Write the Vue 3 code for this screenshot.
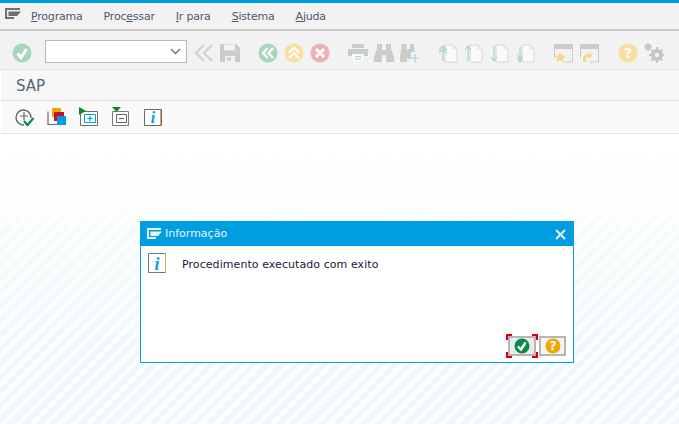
<template>
  <div class="page">
    <div class="topline"></div>

    <div class="menubar">
      <svg class="menu-icon" width="16" height="11" viewBox="0 0 16 11">
        <path d="M0 0h15v2H2v7h7v2H0z" fill="#6f6f6f" />
        <path d="M3.500 3.500H16L12 8H3.500z" fill="#6f6f6f" />
      </svg>
      <a><u>P</u>rograma</a>
      <a>Proc<u>e</u>ssar</a>
      <a><u>I</u>r para</a>
      <a><u>S</u>istema</a>
      <a><u>A</u>juda</a>
    </div>

    <div class="toolbar">
      <svg class="ic" viewBox="0 0 20 20">
        <circle cx="10" cy="10" r="9.500" fill="#a6d7bb" />
        <path d="M5.500 10.500l3.500 4 5.500-8.500" fill="none" stroke="#fff" stroke-width="3" />
      </svg>

      <div class="combo">
        <svg width="11" height="7" viewBox="0 0 11 7">
          <path d="M1 1l4.500 4.500L10 1" fill="none" stroke="#5f6f7f" stroke-width="1.300" />
        </svg>
      </div>

      <svg class="ic back" viewBox="0 0 20 20">
        <path d="M10 2l-8 8 8 8M18 2l-8 8 8 8" fill="none" stroke="#d2d2d2" stroke-width="2.400" />
      </svg>
      <svg class="ic" viewBox="0 0 20 20">
        <path d="M0 1h16l4 4v14H0z" fill="#cbcbcb" />
        <path d="M4 1.500h11v6H4zM5 13h10v6H5z" fill="#f2f2f2" />
        <path d="M7 14.500h4v3H7z" fill="#cbcbcb" />
      </svg>

      <svg class="ic grp" viewBox="0 0 20 20">
        <circle cx="10" cy="10" r="9.500" fill="#a6d7bb" />
        <path d="M9.500 5l-4.500 5 4.500 5M15 5l-4.500 5 4.500 5" fill="none" stroke="#fff" stroke-width="2.200" />
      </svg>
      <svg class="ic" viewBox="0 0 20 20">
        <circle cx="10" cy="10" r="9.500" fill="#f8dfa2" />
        <path d="M5 9.500l5-4.500 5 4.500M5 15l5-4.500 5 4.500" fill="none" stroke="#fff" stroke-width="2.200" />
      </svg>
      <svg class="ic" viewBox="0 0 20 20">
        <circle cx="10" cy="10" r="9.500" fill="#efb0b0" />
        <path d="M6 6l8 8M14 6l-8 8" fill="none" stroke="#fff" stroke-width="3" />
      </svg>

      <svg class="ic grp" viewBox="0 0 20 20">
        <path d="M4 1h12v4H4z" fill="#cbcbcb" />
        <path d="M0 6h20v7H16v-2H4v2H0z" fill="#cbcbcb" />
        <path d="M5 11h10v8H5z" fill="#fafafa" />
        <path d="M7 13.500h6M7 16h6" stroke="#9fd4ef" stroke-width="1" />
      </svg>
      <svg class="ic" viewBox="0 0 20 20">
        <path d="M3 1h5v6h4V1h5v5l3 8v5h-8v-7H8v7H0v-5l3-8z" fill="#cbcbcb" />
      </svg>
      <svg class="ic" viewBox="0 0 20 20">
        <path d="M2 1h4.500v5H10V1h4v5l1 3H11v7H7v3H0v-5z" fill="#cbcbcb" />
        <path d="M15 11v8M11 15h8" stroke="#9fd4ef" stroke-width="1.200" />
      </svg>

      <svg class="ic grp" viewBox="0 0 20 20">
        <path d="M7 2h8l4 4v13H7z" fill="#fafafa" stroke="#d6d6d6" />
        <path d="M14.500 2v4.500H19" fill="#e6e6e6" />
        <path d="M5 18V3M1 7l4-4 4 4M1 10l4-4 4 4" fill="none" stroke="#a6d7bb" stroke-width="1.200" />
      </svg>
      <svg class="ic" viewBox="0 0 20 20">
        <path d="M6 2h8l4 4v13H6z" fill="#fafafa" stroke="#d6d6d6" />
        <path d="M13.500 2v4.500H18" fill="#e6e6e6" />
        <path d="M4 18V3M1 7l3-4 3 4" fill="none" stroke="#a6d7bb" stroke-width="1.200" />
      </svg>
      <svg class="ic" viewBox="0 0 20 20">
        <path d="M6 2h8l4 4v13H6z" fill="#fafafa" stroke="#d6d6d6" />
        <path d="M13.500 2v4.500H18" fill="#e6e6e6" />
        <path d="M4 3v15M1 14l3 4 3-4" fill="none" stroke="#a6d7bb" stroke-width="1.200" />
      </svg>
      <svg class="ic" viewBox="0 0 20 20">
        <path d="M6 2h8l4 4v13H6z" fill="#fafafa" stroke="#d6d6d6" />
        <path d="M13.500 2v4.500H18" fill="#e6e6e6" />
        <path d="M4 4v15M1 12l3 4 3-4M1 15l3 4 3-4" fill="none" stroke="#a6d7bb" stroke-width="1.200" />
      </svg>

      <svg class="ic grp" viewBox="0 0 20 20">
        <path d="M0 1h19v5H0z" fill="#cbcbcb" />
        <path d="M.5 6v9M18.500 6v13H10" fill="none" stroke="#cbcbcb" />
        <path d="M6 9l1.700 3.500 3.800.5-2.800 2.500.8 3.800L6 17l-3.500 1.800.8-3.800L.5 13l3.800-.5z" fill="#f8d58c" />
      </svg>
      <svg class="ic" viewBox="0 0 20 20">
        <path d="M0 1h19v5H0z" fill="#cbcbcb" />
        <path d="M.5 6v9M18.500 6v13H10" fill="none" stroke="#cbcbcb" />
        <path d="M3 19v-5l3-3h3v-2l3 3.500-3 3.500v-2H7l-1 1v4z" fill="#f8d58c" />
      </svg>

      <svg class="ic grp" viewBox="0 0 20 20">
        <circle cx="10" cy="10" r="9.500" fill="#f8dfa2" />
        <text x="10" y="15" text-anchor="middle" class="q">?</text>
      </svg>
      <svg class="ic" viewBox="0 0 20 20">
        <circle cx="13" cy="12" r="4.500" fill="none" stroke="#c4c4c4" stroke-width="3" />
        <path d="M13 4v16M5 12h16M7.500 6.500l11 11M18.500 6.500l-11 11" stroke="#c4c4c4" stroke-width="2" />
        <circle cx="4" cy="4" r="2.200" fill="none" stroke="#c4c4c4" stroke-width="1.600" />
        <path d="M4 0v8M0 4h8M1.500 1.500l5 5M6.500 1.500l-5 5" stroke="#c4c4c4" stroke-width="1" />
        <circle cx="13" cy="12" r="2.300" fill="#f2f2f2" />
      </svg>
    </div>

    <div class="titlebar">SAP</div>

    <div class="appbar">
      <svg class="ic" viewBox="0 0 20 20">
        <path d="M16 11a7.500 7.500 0 1 0-7 7" fill="none" stroke="#5f6468" stroke-width="1.400" />
        <path d="M9 5v8M5 9h8" stroke="#5f6468" stroke-width="1.200" />
        <path d="M9 14l3.500 4 6-7" fill="none" stroke="#0a8a4a" stroke-width="2.200" />
      </svg>
      <svg class="ic" viewBox="0 0 20 20">
        <path d="M1 4.500v13h9" fill="none" stroke="#6b6b6b" stroke-width="1.200" />
        <path d="M5 1h9v9H5z" fill="#f0a800" />
        <path d="M7 5h10v9H7z" fill="#c8102e" />
        <path d="M10 9h9v9h-9z" fill="#009de0" />
      </svg>
      <svg class="ic" viewBox="0 0 20 20">
        <path d="M1.500 4.500h17v14h-17z" fill="#fff" stroke="#6b6b6b" />
        <path d="M5.500 7.500h11v8h-11z" fill="#fff" stroke="#009de0" />
        <path d="M11 9v5M8.500 11.500h5" stroke="#009de0" stroke-width="1.200" />
        <path d="M0 0l7 4-7 4z" fill="#0a8a2a" />
      </svg>
      <svg class="ic" viewBox="0 0 20 20">
        <path d="M1.500 4.500h16v14h-16z" fill="#fff" stroke="#7d7d7d" />
        <path d="M5.500 7.500h10v8h-10z" fill="#fff" stroke="#5f6468" />
        <path d="M8 11.500h5" stroke="#5f6468" stroke-width="1.200" />
        <path d="M1 0h9L5.500 5z" fill="#0a8a2a" />
      </svg>
      <svg class="ic" viewBox="0 0 20 20">
        <path d="M1.500 2.500h17v16h-17z" fill="#fff" stroke="#6b6b6b" />
        <path d="M17.500 3v15" stroke="#d9a35f" />
        <text x="10" y="16" text-anchor="middle" class="i">i</text>
      </svg>
    </div>

    <div class="body"></div>

    <div class="dialog">
      <div class="dialog-head">
        <svg width="15" height="11" viewBox="0 0 15 11">
          <path d="M0 0h14v2H2v7h7v2H0z" fill="#e6f5fc" />
          <path d="M3.500 3.500H15L11 8H3.500z" fill="#e6f5fc" />
        </svg>
        <span>Informação</span>
        <svg class="close" width="11" height="11" viewBox="0 0 11 11">
          <path d="M1 1l9 9M10 1l-9 9" stroke="#e6f5fc" stroke-width="2" />
        </svg>
      </div>
      <div class="dialog-msg">
        <svg width="18" height="20" viewBox="0 0 18 20">
          <path d="M.5 .5h17v19H.5z" fill="#fff" stroke="#6b7a88" />
          <path d="M17.500 1v18" stroke="#d9a35f" />
          <text x="9" y="17" text-anchor="middle" class="i big">i</text>
        </svg>
        <p>Procedimento executado com exito</p>
      </div>
      <div class="dialog-actions">
        <button class="focused">
          <span class="corners"></span>
          <svg width="16" height="16" viewBox="0 0 16 16">
            <circle cx="8" cy="8" r="7.500" fill="#0a8a4a" />
            <path d="M4 8.500l3 3 4.500-7" fill="none" stroke="#fff" stroke-width="2.400" />
          </svg>
        </button>
        <button class="help">
          <svg width="16" height="16" viewBox="0 0 16 16">
            <circle cx="8" cy="8" r="7.500" fill="#f0a800" />
            <text x="8" y="12" text-anchor="middle" class="q small">?</text>
          </svg>
        </button>
      </div>
    </div>
  </div>
</template>

<script setup>
</script>

<style>
html, body {
  margin: 0;
  background: #fff;
}
</style>

<style scoped>
.page {
  position: relative;
  width: 679px;
  height: 424px;
  overflow: hidden;
  display: flex;
  flex-direction: column;
  font-family: "DejaVu Sans", sans-serif;
  background: #fff;
}

.topline {
  height: 3px;
  background: #009de0;
}

.menubar {
  height: 26px;
  box-sizing: border-box;
  display: flex;
  align-items: center;
  gap: 21px;
  padding: 1px 0 0 31px;
  background: #f2f2f2;
  position: relative;
  font-size: 11px;
  letter-spacing: -0.2px;
  color: #50586a;
}

.menu-icon {
  position: absolute;
  left: 5px;
  top: 5px;
}

.toolbar {
  height: 41px;
  box-sizing: border-box;
  display: flex;
  align-items: center;
  gap: 6px;
  padding: 5px 0 0 12px;
  background: #f2f2f2;
  border-top: 2px solid #c9c9c9;
  border-bottom: 1px solid #e3e3e3;
}

.ic {
  width: 20px;
  height: 20px;
  flex: none;
}

.grp {
  margin-left: 12px;
}

.combo {
  width: 142px;
  height: 23px;
  box-sizing: border-box;
  margin: 0 0 2px 7px;
  display: flex;
  align-items: center;
  justify-content: flex-end;
  padding-right: 5px;
  background: #fff;
  border: 1px solid #b8b8b8;
}

.back {
  margin-left: 1px;
}

.q {
  font: bold 14px "DejaVu Sans", sans-serif;
  fill: #fff;
}

.q.small {
  font-size: 12px;
}

.i {
  font: italic bold 16px "Liberation Serif", serif;
  fill: #0a9be0;
}

.i.big {
  font-size: 18px;
}

.titlebar {
  height: 31px;
  box-sizing: border-box;
  padding: 7px 0 0 15px;
  background: #f7f7f7;
  border-left: 1px solid #fff;
  border-bottom: 1px solid #dcdcdc;
  font-size: 15px;
  color: #556575;
}

.appbar {
  height: 33px;
  box-sizing: border-box;
  display: flex;
  align-items: center;
  gap: 12px;
  padding-left: 14px;
  background: #fafafa;
  border-left: 1px solid #fff;
  border-bottom: 1px solid #e4e4e4;
}

.body {
  flex: 1;
  background:
    linear-gradient(#fff 5%, rgba(255, 255, 255, 0) 70%),
    repeating-linear-gradient(135deg, #f0f7fb 0 5px, #fbfdfe 5px 10px);
}

.dialog {
  position: absolute;
  left: 140px;
  top: 221px;
  width: 434px;
  height: 142px;
  box-sizing: border-box;
  display: flex;
  flex-direction: column;
  background: #fff;
  border: 1px solid #009de0;
}

.dialog-head {
  height: 24px;
  flex: none;
  display: flex;
  align-items: center;
  gap: 3px;
  padding: 0 8px 2px 6px;
  box-sizing: border-box;
  background: #009de0;
  color: #e6f5fc;
  font-size: 11px;
}

.close {
  margin-left: auto;
  margin-right: -1px;
  margin-top: 2px;
}

.dialog-msg {
  display: flex;
  align-items: center;
  gap: 16px;
  padding: 7px 0 0 7px;
}

.dialog-msg p {
  margin: 3px 0 0;
  font-size: 11px;
  letter-spacing: 0.07px;
  color: #1a1a3a;
}

.dialog-actions {
  margin-top: auto;
  display: flex;
  justify-content: flex-end;
  gap: 3px;
  padding: 0 7px 6px 0;
}

button {
  position: relative;
  width: 28px;
  height: 20px;
  padding: 0;
  box-sizing: border-box;
  display: flex;
  align-items: center;
  justify-content: center;
  background: #f4f4f4;
  border: 2px solid #b6b6b6;
}

.help {
  width: 27px;
}

.focused {
  background: #ececec;
}

.corners {
  position: absolute;
  inset: -4px;
  background:
    linear-gradient(#d8000f, #d8000f) 0 0 / 6px 2px,
    linear-gradient(#d8000f, #d8000f) 0 0 / 2px 6px,
    linear-gradient(#d8000f, #d8000f) 100% 0 / 6px 2px,
    linear-gradient(#d8000f, #d8000f) 100% 0 / 2px 6px,
    linear-gradient(#d8000f, #d8000f) 0 100% / 6px 2px,
    linear-gradient(#d8000f, #d8000f) 0 100% / 2px 6px,
    linear-gradient(#d8000f, #d8000f) 100% 100% / 6px 2px,
    linear-gradient(#d8000f, #d8000f) 100% 100% / 2px 6px;
  background-repeat: no-repeat;
}
</style>
